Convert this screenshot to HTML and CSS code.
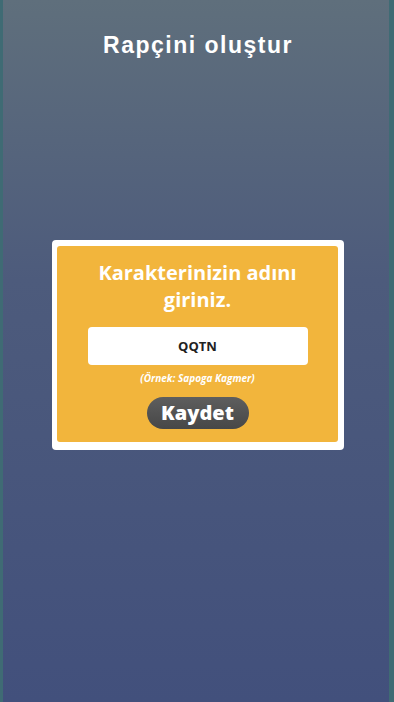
FILE: index.html
```html
<!DOCTYPE html>
<html lang="tr">
<head>
    <meta charset="UTF-8">
    <meta name="viewport" content="width=device-width, initial-scale=1.0">
    <title>Rapçini oluştur</title>
    <link rel="stylesheet" href="styles.css">
</head>
<body>
    <div class="screen">
        <header class="top-bar">
            <h1>Rapçini oluştur</h1>
        </header>

        <main class="content">
            <div class="name-card">
                <div class="name-card-inner">
                    <h2>Karakterinizin adını giriniz.</h2>
                    <input type="text" class="name-input" value="QQTN" autocomplete="off">
                    <p class="hint">(Örnek: Sapoga Kagmer)</p>
                    <button class="save-button">Kaydet</button>
                </div>
            </div>
        </main>
    </div>
</body>
</html>
```

FILE: styles.css
```css
html, body {
    margin: 0;
    padding: 0;
    height: 100%;
}

body {
    font-family: 'Open Sans', 'DejaVu Sans', sans-serif;
    background-color: #42507c;
}

.screen {
    height: 702px;
    display: flex;
    flex-direction: column;
    background: linear-gradient(to bottom, #5f6f7c 0%, #4d5b7c 40%, #42507c 100%);
    border-left: 3px solid #3f6b74;
    border-right: 5px solid #3f6b74;
    box-sizing: border-box;
}

.top-bar {
    padding-top: 31px;
    padding-left: 4px;
    text-align: center;
}

.top-bar h1 {
    margin: 0;
    color: #fff;
    font-family: 'Liberation Sans', Arial, sans-serif;
    font-weight: 700;
    font-size: 23px;
    letter-spacing: 1.5px;
    line-height: 28px;
}

.content {
    flex: 1;
    display: flex;
    justify-content: center;
    padding-top: 181px;
    padding-left: 4px;
}

.name-card {
    width: 292px;
    height: 210px;
    background-color: #fff;
    border-radius: 4px;
    padding: 6px 6px 8px 5px;
    box-sizing: border-box;
}

.name-card-inner {
    height: 100%;
    background-color: #f2b53c;
    border-radius: 3px;
    display: flex;
    flex-direction: column;
    align-items: center;
    padding-top: 13px;
    box-sizing: border-box;
}

.name-card-inner h2 {
    margin: 0;
    width: 220px;
    color: #fff;
    font-size: 20px;
    font-weight: 700;
    line-height: 27px;
    text-align: center;
}

.name-input {
    margin-top: 14px;
    width: 220px;
    height: 38px;
    border: none;
    border-radius: 4px;
    background-color: #fff;
    text-align: center;
    font-family: 'Open Sans', sans-serif;
    font-size: 13px;
    font-weight: 700;
    color: #222;
    outline: none;
    box-sizing: border-box;
}

.hint {
    margin: 6px 0 0;
    color: #fff;
    font-size: 10px;
    font-weight: 700;
    font-style: italic;
    line-height: 14px;
}

.save-button {
    margin-top: 12px;
    width: 102px;
    height: 32px;
    border: none;
    border-radius: 16px;
    background: linear-gradient(to bottom, #5e5e5e, #474747);
    color: #fff;
    font-family: 'Open Sans', sans-serif;
    font-size: 20px;
    font-weight: 800;
    line-height: 32px;
    padding: 0;
    cursor: pointer;
}
```
